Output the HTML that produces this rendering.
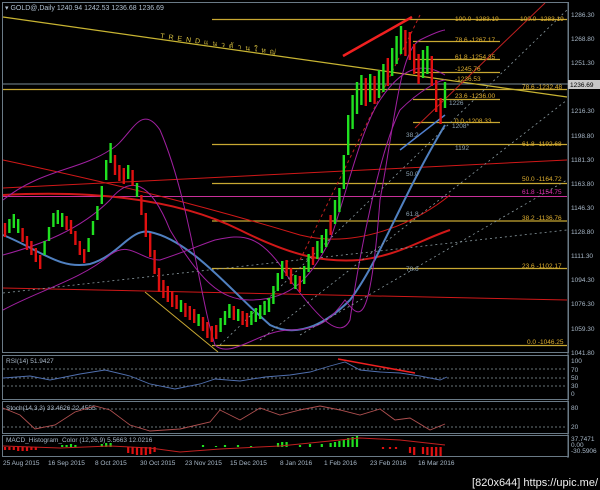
<!DOCTYPE html>
<html><head><meta charset="utf-8"><style>
html,body{margin:0;padding:0;background:#000;width:600px;height:490px;overflow:hidden}
svg{display:block}
text{font-family:"Liberation Sans",sans-serif}
</style></head><body>
<svg width="600" height="490" viewBox="0 0 600 490" xmlns="http://www.w3.org/2000/svg">
<rect width="600" height="490" fill="#000"/>
<g fill="none" stroke="#6a7a86" stroke-width="1">
<rect x="2.5" y="2.5" width="566" height="350"/>
<rect x="2.5" y="355.5" width="566" height="44"/>
<rect x="2.5" y="401.5" width="566" height="32"/>
<rect x="2.5" y="435.5" width="566" height="21"/>
</g>
<line x1="568" y1="2" x2="568" y2="458" stroke="#6a7a86"/>
<line x1="3" y1="84" x2="568" y2="84" stroke="#7a8c96" stroke-width="1"/>
<g stroke="#c8a832" stroke-width="1.2">
<line x1="212" y1="19.5" x2="567" y2="19.5"/>
<line x1="3" y1="89.5" x2="567" y2="89.5"/>
<line x1="212" y1="144.5" x2="567" y2="144.5"/>
<line x1="212" y1="183.5" x2="567" y2="183.5"/>
<line x1="212" y1="221" x2="567" y2="221"/>
<line x1="212" y1="268.5" x2="567" y2="268.5"/>
<line x1="212" y1="345.5" x2="567" y2="345.5"/>
<line x1="413" y1="41.5" x2="500" y2="41.5"/>
<line x1="413" y1="59.5" x2="500" y2="59.5"/>
<line x1="413" y1="72.5" x2="500" y2="72.5"/>
<line x1="413" y1="99.5" x2="500" y2="99.5"/>
<line x1="413" y1="122.5" x2="500" y2="122.5"/>
</g>
<line x1="3" y1="196.5" x2="567" y2="196.5" stroke="#c8309a" stroke-width="1"/>
<line x1="3" y1="17" x2="567" y2="97" stroke="#c8b432" stroke-width="1.2"/>
<text x="160" y="38" fill="#d8c040" font-size="7" transform="rotate(8 160 38)" letter-spacing="4">TRENDแนวต้านใหญ่</text>
<g fill="none" stroke="#d01818">
<line x1="3" y1="188" x2="567" y2="160" stroke-width="1"/>
<line x1="3" y1="288" x2="567" y2="300" stroke-width="1"/>
<path d="M3 160 C120 185 200 205 300 235 C360 250 420 220 450 195" stroke-width="1"/>
<path d="M3 195 C100 190 180 200 240 230 C300 260 330 262 360 260 C400 255 420 240 450 230" stroke-width="2"/>
<line x1="343" y1="56" x2="412" y2="17" stroke="#f02020" stroke-width="2.5"/>
<line x1="415" y1="128" x2="545" y2="3" stroke="#c02020" stroke-width="1"/>
<line x1="300" y1="260" x2="420" y2="15" stroke="#c02020" stroke-width="1" stroke-dasharray="3 3"/>
</g>
<path d="M3 235 C40 250 60 270 90 264 C120 255 130 228 150 232 C190 240 230 290 270 325 C300 340 330 320 350 300 C380 260 400 200 445 125" fill="none" stroke="#5080c0" stroke-width="2"/>
<g fill="none" stroke="#a020a0" stroke-width="1">
<path d="M3 200 C40 170 80 170 110 150 C130 140 140 100 160 130 C190 200 200 300 215 345 C230 360 260 330 290 330 C320 330 330 320 345 300 C360 320 370 330 380 200 C395 120 400 50 420 40 C440 30 445 30 445 30"/>
<path d="M3 310 C40 290 80 280 110 255 C130 240 140 260 160 260 C190 250 200 245 215 240 C240 235 260 230 290 280 C320 320 340 340 350 320 C360 250 380 150 400 110 C420 90 440 80 445 80"/>
<path d="M3 255 C40 245 80 230 110 200 C130 175 150 180 170 230 C200 280 220 300 250 300 C290 300 310 280 330 240 C345 200 360 130 380 100 C400 70 420 60 445 75"/>
</g>
<line x1="145" y1="292" x2="218" y2="352" stroke="#c8a832" stroke-width="1"/>
<g stroke="#8a9aa0" stroke-width="0.8" stroke-dasharray="2 3" fill="none">
<line x1="3" y1="293" x2="567" y2="230"/>
<line x1="220" y1="345" x2="567" y2="10"/>
<line x1="260" y1="340" x2="567" y2="100"/>
<line x1="300" y1="335" x2="567" y2="180"/>
</g>
<line x1="400" y1="150" x2="445" y2="115" stroke="#5080d0" stroke-width="1.5"/>
<!-- candles -->
<path fill="none" stroke="#20e020" stroke-width="2.4" d="M9.4 219V233 M13.8 214V228 M18.2 219V233 M44.6 241V255 M49 227V241 M53.4 213V227 M57.8 210V224 M62.2 213V227 M88.6 238V252 M93 221V235 M97.4 206V220 M101.8 186V204 M106.2 160V180 M110.6 143V163 M128.2 165V179 M137 183V197 M181 300V312 M198.6 314V326 M220.6 318V332 M225 311V325 M229.4 304V318 M238.2 309V321 M251.4 311V325 M255.8 308V322 M260.2 305V319 M264.6 301V315 M269 298V312 M273.4 286V304 M277.8 273V291 M282.2 261V279 M295.4 275V289 M304.2 266V284 M308.6 254V272 M317.4 241V259 M321.8 235V253 M326.2 229V247 M335 200V224 M339.4 188V212 M343.8 155V189 M348.2 115V155 M352.6 95V129 M357 82V114 M361.4 75V105 M370.2 74V102 M379 70V98 M383.4 64V92 M392.2 48V76 M396.6 36V64 M401 26V54 M423 50V78 M427.4 46V74 M445 82V108"/>
<path fill="none" stroke="#e01010" stroke-width="2.4" d="M5 223V237 M22.6 228V242 M27 236V250 M31.4 241V255 M35.8 248V262 M40.2 255V269 M66.6 216V230 M71 220V234 M75.4 231V245 M79.8 241V255 M84.2 249V263 M115 155V175 M119.4 165V181 M123.8 168V184 M132.6 170V186 M141.4 195V215 M145.8 213V237 M150.2 233V257 M154.6 250V274 M159 268V292 M163.4 280V298 M167.8 286V302 M172.2 291V307 M176.6 295V309 M185.4 303V317 M189.8 306V320 M194.2 309V323 M203 317V331 M207.4 322V338 M211.8 326V342 M216.2 325V339 M233.8 306V320 M242.6 311V325 M247 313V327 M286.6 260V276 M291 268V284 M299.8 276V292 M313 247V265 M330.6 215V235 M365.8 78V106 M374.6 76V104 M387.8 58V86 M405.4 30V56 M409.8 32V60 M414.2 44V74 M418.6 54V84 M431.8 56V86 M436.2 80V112 M440.6 98V124"/>
<g fill="#e0b030" font-size="6.5">
<text x="455" y="21">100.0 -1283.19</text>
<text x="520" y="21">100.0 -1283.19</text>
<text x="455" y="42">78.6 -1267.17</text>
<text x="455" y="59">61.8 -1254.35</text>
<text x="455" y="71">-1245.76</text>
<text x="455" y="81">-1236.53</text>
<text x="522" y="89">78.6 -1232.48</text>
<text x="455" y="98">23.6 -1236.00</text>
<text x="455" y="123">0.0 -1208.33</text>
<text x="522" y="146">61.8 -1192.68</text>
<text x="522" y="181">50.0 -1164.72</text>
<text x="522" y="194" fill="#e030b0">61.8 -1154.75</text>
<text x="522" y="220">38.2 -1136.76</text>
<text x="522" y="268">23.6 -1102.17</text>
<text x="527" y="344">0.0 -1046.25</text>
</g>
<g fill="#8aa0b0" font-size="6.5">
<text x="449" y="105">1226</text><text x="452" y="128">1208*</text>
<text x="455" y="150">1192</text><text x="406" y="137">38.2</text>
<text x="406" y="176">50.0</text><text x="406" y="216">61.8</text><text x="406" y="271">78.6</text>
</g>
<text x="5" y="10" fill="#b0c0d0" font-size="7">▾ GOLD@,Daily  1240.94 1242.53 1236.68 1236.69</text>
<g fill="#a8b8c8" font-size="6.5">
<text x="571" y="17">1286.30</text><text x="571" y="41">1268.80</text><text x="571" y="65">1251.30</text>
<text x="571" y="113">1216.30</text><text x="571" y="138">1198.80</text><text x="571" y="162">1181.30</text>
<text x="571" y="186">1163.80</text><text x="571" y="210">1146.30</text><text x="571" y="234">1128.80</text>
<text x="571" y="258">1111.30</text><text x="571" y="282">1094.30</text><text x="571" y="306">1076.30</text>
<text x="571" y="331">1059.30</text><text x="571" y="355">1041.80</text>
<text x="571" y="363">100</text><text x="571" y="372">70</text><text x="571" y="380">50</text><text x="571" y="388">30</text><text x="571" y="396">0</text>
<text x="571" y="410">80</text><text x="571" y="429">20</text>
<text x="571" y="441">37.7471</text><text x="571" y="447">0.00</text><text x="571" y="453">-30.5906</text>
</g>
<rect x="568" y="80" width="32" height="9" fill="#c8c8c8"/>
<text x="570" y="87" fill="#000" font-size="6.5">1236.69</text>
<g stroke="#8a9aa0" stroke-dasharray="2 2" stroke-width="0.8">
<line x1="3" y1="369" x2="567" y2="369"/><line x1="3" y1="378" x2="567" y2="378"/><line x1="3" y1="386" x2="567" y2="386"/>
<line x1="3" y1="409" x2="567" y2="409"/><line x1="3" y1="427" x2="567" y2="427"/>
</g>
<text x="6" y="363" fill="#a8b8c8" font-size="6.5">RSI(14) 51.9427</text>
<path d="M3 378 L30 376 L50 380 L80 374 L105 370 L130 376 L150 384 L175 389 L200 384 L215 379 L240 381 L265 377 L290 375 L310 372 L330 366 L345 362 L360 370 L380 372 L400 373 L420 376 L440 380 L447 377" fill="none" stroke="#5070b0" stroke-width="0.9"/>
<line x1="338" y1="359" x2="415" y2="373" stroke="#f02020" stroke-width="1.5"/>
<text x="6" y="410" fill="#a8b8c8" font-size="6.5">Stoch(14,3,3) 33.4626 22.4555</text>
<path d="M3 408 L20 415 L35 429 L55 425 L75 412 L95 406 L110 410 L130 425 L150 431 L180 429 L210 422 L220 410 L240 420 L260 408 L280 415 L300 410 L320 406 L340 410 L360 415 L380 409 L395 420 L410 418 L430 430 L445 424" fill="none" stroke="#b05050" stroke-width="0.9"/>
<text x="6" y="442" fill="#a8b8c8" font-size="6.5">MACD_Histogram_Color (12,26,9) 5.5663 12.0216</text>
<!-- MACD bars -->
<path fill="none" stroke="#e01010" stroke-width="2.2" d="M5 447V450 M9.4 447V450 M13.8 447V450 M18.2 447V451 M22.6 447V451 M27 447V451 M31.4 447V450 M35.8 447V450 M128.2 447V453 M132.6 447V454 M137 447V455 M141.4 447V455 M145.8 447V455 M150.2 447V454 M154.6 447V452 M383 447V449 M390 447V449 M396 447V449 M410 447V453 M414.2 447V455 M423 447V454 M427.4 447V455 M431.8 447V456 M436.2 447V456 M440.6 447V456"/>
<path fill="none" stroke="#20e020" stroke-width="2.2" d="M62.2 447V445 M66.6 447V445 M71 447V444 M75.4 447V445 M101.8 447V444 M106.2 447V443 M110.6 447V443 M203 447V445 M216 447V446 M225 447V445 M238 447V445 M251 447V446 M278 447V443 M282.2 447V442 M286.6 447V442 M300 447V445 M310 447V444 M321.8 447V444 M330.6 447V443 M335 447V442 M339.4 447V441 M343.8 447V440 M348.2 447V438 M352.6 447V437 M357 447V436"/>
<path d="M3 446 L60 448 L110 446 L150 448 L180 452 L220 449 L280 446 L340 440 L360 438 L400 440 L445 445" fill="none" stroke="#c02020" stroke-width="1"/>
<g fill="#a8b8c8" font-size="6.5">
<text x="3" y="465">25 Aug 2015</text><text x="48" y="465">16 Sep 2015</text><text x="95" y="465">8 Oct 2015</text>
<text x="140" y="465">30 Oct 2015</text><text x="185" y="465">23 Nov 2015</text><text x="230" y="465">15 Dec 2015</text>
<text x="280" y="465">8 Jan 2016</text><text x="324" y="465">1 Feb 2016</text><text x="370" y="465">23 Feb 2016</text><text x="418" y="465">16 Mar 2016</text>
</g>
<text x="598" y="486" fill="#f0f0f0" font-size="11" text-anchor="end" font-family="Liberation Mono,monospace">[820x644] https://upic.me/</text>
</svg>
</body></html>
